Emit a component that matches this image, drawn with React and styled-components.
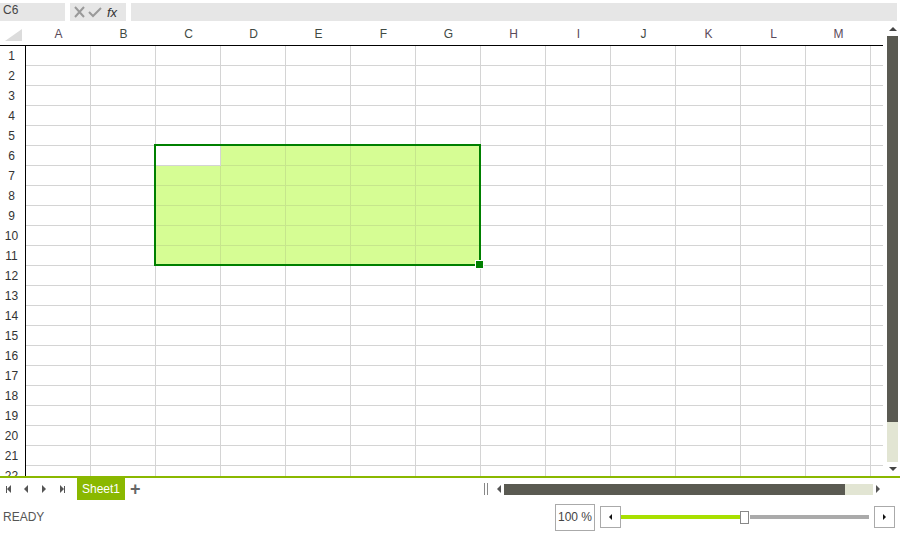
import React from "react";
import styled, { createGlobalStyle } from "styled-components";

const GlobalStyle = createGlobalStyle`
  body {
    margin: 0;
    overflow: hidden;
    background: #fff;
    font-family: "Liberation Sans", Arial, sans-serif;
  }
`;

const COLS = ["A", "B", "C", "D", "E", "F", "G", "H", "I", "J", "K", "L", "M", ""];
const ROWS = Array.from({ length: 22 }, (_, i) => i + 1);
// selection C6:G11, active cell C6
const SEL = { c1: 2, c2: 6, r1: 6, r2: 11 };

const Page = styled.div`
  width: 900px;
  height: 534px;
  display: flex;
  flex-direction: column;
  font-size: 12px;
  color: #333;
`;

const FormulaBar = styled.div`
  display: flex;
  height: 18px;
  margin: 3px 3px 0 0;
`;

const NameBox = styled.div`
  width: 65px;
  background: #e6e6e6;
  color: #444;
  font-size: 12px;
  line-height: 14px;
  padding-left: 3px;
  box-sizing: border-box;
`;

const Buttons = styled.div`
  width: 56px;
  margin-left: 5px;
  background: #e6e6e6;
  display: flex;
  align-items: center;
  gap: 2px;
  padding-left: 3px;
  box-sizing: border-box;
`;

const Fx = styled.span`
  font-style: italic;
  font-size: 13px;
  color: #333;
  margin-left: 3px;
`;

const Formula = styled.div`
  flex: 1;
  margin-left: 5px;
  background: #e6e6e6;
`;

const Main = styled.div`
  display: flex;
  height: 452px;
  margin-top: 3px;
`;

const Sheet = styled.div`
  width: 883px;
  overflow: hidden;
  display: flex;
  flex-direction: column;
`;

const HeaderRow = styled.div`
  display: flex;
  height: 21px;
  flex-shrink: 0;
  border-bottom: 1px solid #000;
`;

const Corner = styled.div`
  width: 26px;
  flex-shrink: 0;
  display: flex;
  align-items: flex-end;
  padding: 0 0 4px 5px;
  box-sizing: border-box;
`;

const ColHead = styled.div`
  width: 65px;
  flex-shrink: 0;
  text-align: center;
  line-height: 21px;
  color: ${(p) => p.$color};
`;

const Body = styled.div`
  position: relative;
  flex: 1;
  overflow: hidden;
`;

const Row = styled.div`
  display: flex;
  height: 20px;
`;

const RowHead = styled.div`
  width: 26px;
  flex-shrink: 0;
  box-sizing: border-box;
  border-right: 1px solid #000;
  padding-right: 2px;
  text-align: center;
  line-height: 20px;
  color: #333;
`;

const Cell = styled.div`
  width: 65px;
  flex-shrink: 0;
  box-sizing: border-box;
  border-right: 1px solid ${(p) => (p.$fill ? "#c6e68c" : "#d4d4d4")};
  border-bottom: 1px solid ${(p) => (p.$fill ? "#c6e68c" : "#d4d4d4")};
  background: ${(p) => (p.$fill ? "#d6fd94" : "#fff")};
`;

const Selection = styled.div`
  position: absolute;
  left: 154px;
  top: 98px;
  width: 327px;
  height: 122px;
  box-sizing: border-box;
  border: 2px solid #008000;
  pointer-events: none;
`;

const Handle = styled.div`
  position: absolute;
  right: -5px;
  bottom: -5px;
  width: 7px;
  height: 7px;
  background: #008000;
  border: 1px solid #fff;
`;

const VScroll = styled.div`
  width: 17px;
  display: flex;
  flex-direction: column;
  align-items: center;
  padding: 3px 0 5px 2px;
  box-sizing: border-box;
`;

const Arrow = styled.div`
  width: 0;
  height: 0;
  border-left: ${(p) => p.$size}px solid transparent;
  border-right: ${(p) => p.$size}px solid transparent;
  ${(p) =>
    p.$dir === "up"
      ? `border-bottom: ${p.$size}px solid #444;`
      : `border-top: ${p.$size}px solid #444;`}
`;

const SideArrow = styled.div`
  width: 0;
  height: 0;
  border-top: ${(p) => p.$size}px solid transparent;
  border-bottom: ${(p) => p.$size}px solid transparent;
  ${(p) =>
    p.$dir === "left"
      ? `border-right: ${p.$size}px solid ${p.$color || "#555"};`
      : `border-left: ${p.$size}px solid ${p.$color || "#555"};`}
`;

const VTrack = styled.div`
  width: 11px;
  margin: 5px 0;
  flex: 1;
  display: flex;
  flex-direction: column;
  background: #e2e5d3;
`;

const VThumb = styled.div`
  height: 386px;
  background: #5a5a52;
`;

const Divider = styled.div`
  height: 2px;
  background: #8ab800;
`;

const SheetBar = styled.div`
  height: 22px;
  display: flex;
  align-items: center;
`;

const Nav = styled.div`
  display: flex;
  align-items: center;
  gap: 11px;
  padding-left: 6px;
  width: 71px;
`;

const NavBtn = styled.div`
  display: flex;
  align-items: center;
  width: 7px;
`;

const Bar = styled.div`
  width: 1px;
  height: 7px;
  background: #555;
`;

const Tab = styled.div`
  background: #8ab800;
  color: #fff;
  height: 22px;
  line-height: 22px;
  padding: 0 5px;
  font-size: 12px;
`;

const Plus = styled.div`
  font-size: 18px;
  color: #666;
  margin-left: 5px;
  line-height: 22px;
  font-weight: bold;
`;

const HScrollArea = styled.div`
  margin-left: auto;
  display: flex;
  align-items: center;
  width: 398px;
  margin-right: 20px;
`;

const Split = styled.div`
  width: 4px;
  height: 12px;
  border-left: 1px solid #888;
  border-right: 1px solid #888;
  box-sizing: border-box;
  margin: 0 9px 0 2px;
`;

const HTrack = styled.div`
  flex: 1;
  height: 11px;
  margin: 0 3px;
  display: flex;
  background: #e2e5d3;
`;

const HThumb = styled.div`
  width: 341px;
  background: #5a5a52;
`;

const StatusBar = styled.div`
  flex: 1;
  display: flex;
  align-items: center;
  padding-left: 3px;
`;

const Ready = styled.div`
  color: #555;
  font-size: 12px;
`;

const ZoomBox = styled.div`
  margin-left: auto;
  width: 40px;
  height: 27px;
  box-sizing: border-box;
  border: 1px solid #aaa;
  text-align: center;
  line-height: 25px;
  font-size: 12px;
  color: #444;
`;

const ZoomBtn = styled.div`
  width: 21px;
  height: 22px;
  box-sizing: border-box;
  border: 1px solid #aaa;
  display: flex;
  align-items: center;
  justify-content: center;
  margin-left: ${(p) => p.$ml}px;
  margin-right: ${(p) => p.$mr || 0}px;
`;

const Slider = styled.div`
  width: 253px;
  display: flex;
  align-items: center;
`;

const Fill = styled.div`
  height: 4px;
  width: ${(p) => p.$w}px;
  background: ${(p) => p.$color};
`;

const Knob = styled.div`
  width: 7px;
  height: 11px;
  border: 1px solid #888;
  background: #fff;
  margin-right: 1px;
`;

export default function App() {
  const colColor = (c) =>
    ["A", "H", "I", "K", "M", "L"].includes(c) ? "#5a4a5a" : "#3f4a44";
  return (
    <Page>
      <GlobalStyle />
      <FormulaBar>
        <NameBox>C6</NameBox>
        <Buttons>
          <svg width="13" height="12" viewBox="0 0 13 12">
            <path d="M2 1 L11 11 M11 1 L2 11" stroke="#9a9a9a" strokeWidth="2" />
          </svg>
          <svg width="14" height="12" viewBox="0 0 14 12">
            <path d="M1 6 L5 10 L13 2" stroke="#9a9a9a" strokeWidth="2" fill="none" />
          </svg>
          <Fx>fx</Fx>
        </Buttons>
        <Formula />
      </FormulaBar>

      <Main>
        <Sheet>
          <HeaderRow>
            <Corner>
              <svg width="17" height="12" viewBox="0 0 17 12">
                <polygon points="17,0 17,12 0,12" fill="#dcdcdc" />
              </svg>
            </Corner>
            {COLS.map((c, i) => (
              <ColHead key={i} $color={colColor(c)}>
                {c}
              </ColHead>
            ))}
          </HeaderRow>
          <Body>
            {ROWS.map((r) => (
              <Row key={r}>
                <RowHead>{r}</RowHead>
                {COLS.map((c, ci) => {
                  const inSel =
                    ci >= SEL.c1 && ci <= SEL.c2 && r >= SEL.r1 && r <= SEL.r2;
                  const active = ci === SEL.c1 && r === SEL.r1;
                  return <Cell key={ci} $fill={inSel && !active} />;
                })}
              </Row>
            ))}
            <Selection>
              <Handle />
            </Selection>
          </Body>
        </Sheet>
        <VScroll>
          <Arrow $dir="up" $size={4} />
          <VTrack>
            <VThumb />
          </VTrack>
          <Arrow $dir="down" $size={4} />
        </VScroll>
      </Main>

      <Divider />

      <SheetBar>
        <Nav>
          <NavBtn>
            <Bar />
            <SideArrow $dir="left" $size={4} />
          </NavBtn>
          <NavBtn>
            <SideArrow $dir="left" $size={4} />
          </NavBtn>
          <NavBtn>
            <SideArrow $dir="right" $size={4} />
          </NavBtn>
          <NavBtn>
            <SideArrow $dir="right" $size={4} />
            <Bar />
          </NavBtn>
        </Nav>
        <Tab>Sheet1</Tab>
        <Plus>+</Plus>
        <HScrollArea>
          <Split />
          <SideArrow $dir="left" $size={4} />
          <HTrack>
            <HThumb />
          </HTrack>
          <SideArrow $dir="right" $size={4} />
        </HScrollArea>
      </SheetBar>

      <StatusBar>
        <Ready>READY</Ready>
        <ZoomBox>100 %</ZoomBox>
        <ZoomBtn $ml={5}>
          <SideArrow $dir="left" $size={3} $color="#111" />
        </ZoomBtn>
        <Slider>
          <Fill $w={119} $color="#a8e000" />
          <Knob />
          <Fill $w={119} $color="#aaa" />
        </Slider>
        <ZoomBtn $ml={0} $mr={5}>
          <SideArrow $dir="right" $size={3} $color="#111" />
        </ZoomBtn>
      </StatusBar>
    </Page>
  );
}
